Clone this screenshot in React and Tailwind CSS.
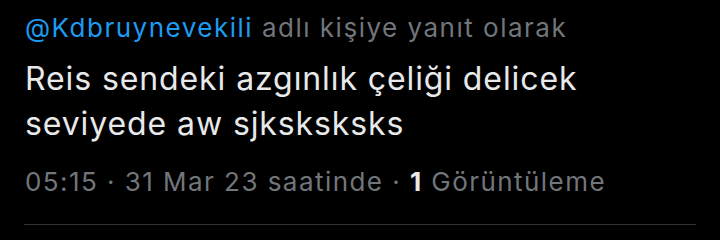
export default function App() {
  return (
    <div
      className="w-[720px] h-[240px] bg-black overflow-hidden"
      style={{ fontFamily: "Inter, 'Noto Sans', sans-serif" }}
    >
      <div className="pl-[25px] pr-[24px] pt-[12px]">
        {/* reply line */}
        <div className="text-[26px] leading-[32px] tracking-[1.5px] text-[#71767b] whitespace-nowrap">
          <span className="text-[#1d9bf0]">@Kdbruynevekili</span> adlı kişiye yanıt olarak
        </div>

        {/* tweet text */}
        <div className="mt-[12px] text-[32px] leading-[45px] tracking-[0.9px] text-[#e7e9ea] whitespace-nowrap">
          Reis sendeki azgınlık çeliği delicek
          <br />
          seviyede aw sjksksksks
        </div>

        {/* meta */}
        <div className="mt-[20px] text-[26px] leading-[32px] tracking-[1.45px] text-[#71767b] whitespace-nowrap">
          05:15 · 31 Mar 23 saatinde · <span className="font-bold text-[#e7e9ea]">1</span> Görüntüleme
        </div>

        <div className="mt-[26px] -ml-px h-px bg-[#2f3336]" />
      </div>
    </div>
  )
}
